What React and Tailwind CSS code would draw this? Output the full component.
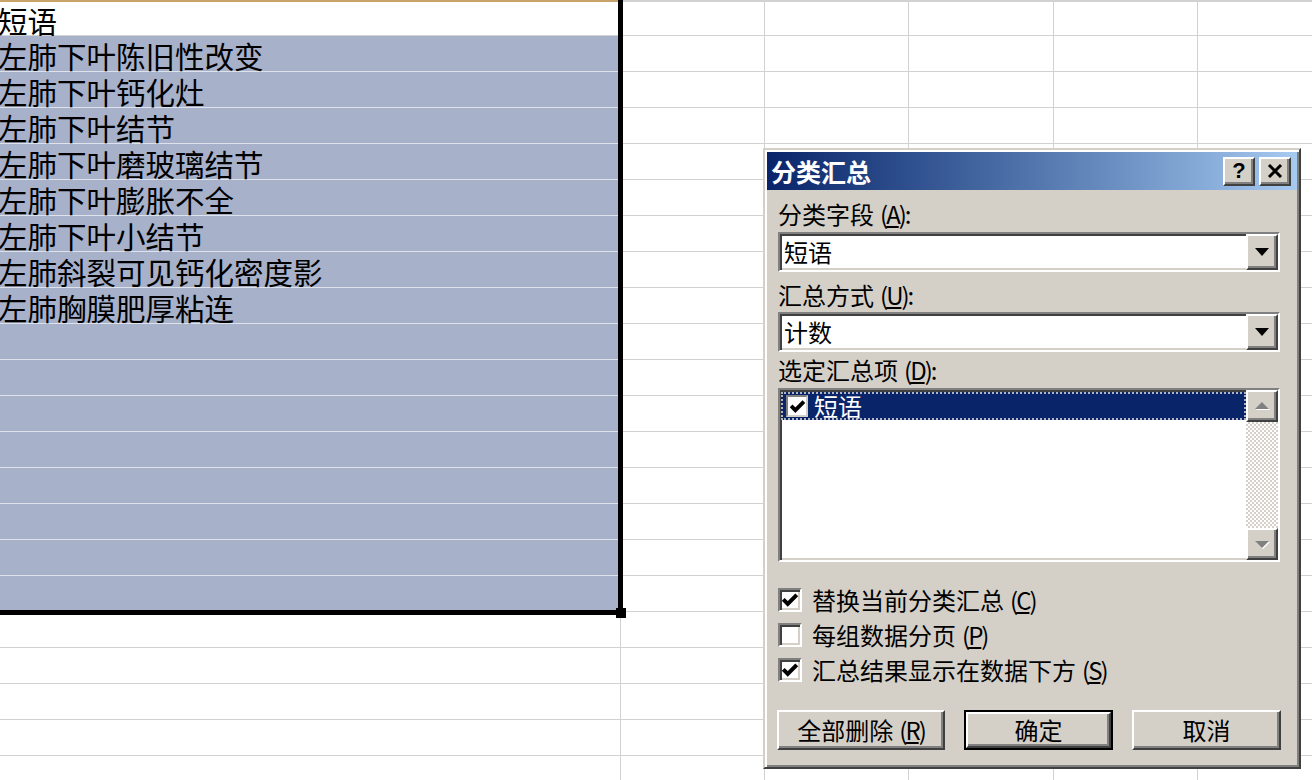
import React from "react";

const phrases = [
  "短语",
  "左肺下叶陈旧性改变",
  "左肺下叶钙化灶",
  "左肺下叶结节",
  "左肺下叶磨玻璃结节",
  "左肺下叶膨胀不全",
  "左肺下叶小结节",
  "左肺斜裂可见钙化密度影",
  "左肺胸膜肥厚粘连",
];

const raised =
  "bg-[#d4d0c8] border-2 border-t-white border-l-white border-r-[#404040] border-b-[#404040] shadow-[inset_-2px_-2px_0_0_#808080]";
const sunken =
  "border-2 border-t-[#808080] border-l-[#808080] border-r-white border-b-white shadow-[inset_2px_2px_0_0_#404040,inset_-2px_-2px_0_0_#d4d0c8]";

const otherCols = ["w-[144px]", "w-[144px]", "w-[145px]", "w-[144px]"];

function Row({ index }) {
  const text = phrases[index] || "";
  const selected = index >= 1 && index <= 16;
  const first = index === 0;
  return (
    <div className="flex h-[36px] shrink-0">
      <div
        className={`w-[621px] shrink-0 flex items-center border-r border-b whitespace-nowrap ${
          selected ? "bg-[#a7b1ca] border-[#dde2eb]" : "bg-white border-[#d2d2d2]"
        } ${first ? "border-t-2 border-t-[#c8a46a]" : ""}`}
      >
        <span className="block -ml-[2px] pt-[2px] text-[29.5px] leading-[32px] text-black">{text}</span>
      </div>
      {otherCols.map((w, i) => (
        <div
          key={i}
          className={`${w} shrink-0 border-r border-b border-[#d2d2d2] ${first ? "border-t-2 border-t-[#d2d2d2]" : ""}`}
        />
      ))}
      <div className={`flex-1 border-b border-[#d2d2d2] ${first ? "border-t-2 border-t-[#d2d2d2]" : ""}`} />
    </div>
  );
}

// mnemonic key, e.g. (A)
function Mn({ k }) {
  return (
    <span className="ml-[6px] tracking-[-2px]">
      (<u className="underline-offset-2">{k}</u>)
    </span>
  );
}

function Tick({ size = 18 }) {
  return (
    <svg width={size} height={size} viewBox="0 0 16 16">
      <polyline points="2,7.5 6,11.5 14,3.5" fill="none" stroke="#000" strokeWidth="3.6" />
    </svg>
  );
}

function Combo({ value }) {
  return (
    <div className={`h-[40px] w-[502px] flex items-center bg-white ${sunken}`}>
      <span className="flex-1 pl-[4px] text-[24px] leading-none text-black">{value}</span>
      <div className={`w-[32px] h-full flex items-center justify-center ${raised}`}>
        <svg width="14" height="8" viewBox="0 0 14 8">
          <path d="M0 0h14L7 8z" fill="#000" />
        </svg>
      </div>
    </div>
  );
}

function ScrollArrow({ up }) {
  return (
    <div className={`h-[32px] w-full flex items-center justify-center ${raised}`}>
      <svg width="16" height="10" viewBox="0 0 16 10">
        {up ? (
          <>
            <path d="M2 9h14L9 2z" fill="#fff" />
            <path d="M1 8h14L8 1z" fill="#808080" />
          </>
        ) : (
          <>
            <path d="M2 3h14L9 10z" fill="#fff" />
            <path d="M1 2h14L8 9z" fill="#808080" />
          </>
        )}
      </svg>
    </div>
  );
}

function CheckBox({ checked, label, k }) {
  return (
    <div className="flex items-center h-[24px] gap-[10px]">
      <div className={`w-[24px] h-[24px] bg-white flex items-center justify-center ${sunken}`}>
        {checked && <Tick />}
      </div>
      <span className="text-[24px] leading-none text-black whitespace-nowrap">
        {label}
        <Mn k={k} />
      </span>
    </div>
  );
}

function Button({ className, children }) {
  return (
    <div className={`h-[40px] flex items-center justify-center text-[24px] leading-none text-black ${raised} ${className}`}>
      {children}
    </div>
  );
}

function Dialog() {
  return (
    <div className="absolute left-[763px] top-[148px] w-[538px] h-[621px] bg-[#d4d0c8] border-2 border-t-[#d4d0c8] border-l-[#d4d0c8] border-r-[#404040] border-b-[#404040] shadow-[inset_2px_2px_0_0_#ffffff,inset_-2px_-2px_0_0_#808080] p-[2px] flex flex-col">
      <div className="h-[38px] shrink-0 flex items-center bg-linear-to-r from-[#0a246a] to-[#a6caf0] pl-[4px] pr-[6px]">
        <span className="flex-1 text-white font-bold text-[25px] leading-none">分类汇总</span>
        <div className={`w-[32px] h-[29px] mr-[4px] flex items-center justify-center ${raised}`}>
          <span className="font-['Liberation_Sans',sans-serif] font-bold text-[22px] leading-none text-black">?</span>
        </div>
        <div className={`w-[32px] h-[29px] flex items-center justify-center ${raised}`}>
          <svg width="16" height="14" viewBox="0 0 16 14">
            <path d="M2 1L14 13M14 1L2 13" stroke="#000" strokeWidth="3" fill="none" />
          </svg>
        </div>
      </div>

      <div className="flex flex-col pl-[11px]">
        <div className="mt-[6px] h-[36px] flex items-center text-[24px] leading-none text-black">
          分类字段<Mn k="A" />:
        </div>
        <Combo value="短语" />
        <div className="h-[40px] pt-[6px] flex items-center text-[24px] leading-none text-black">
          汇总方式<Mn k="U" />:
        </div>
        <Combo value="计数" />
        <div className="h-[36px] flex items-center text-[24px] leading-none text-black">
          选定汇总项<Mn k="D" />:
        </div>

        <div className={`h-[174px] w-[502px] flex bg-white ${sunken}`}>
          <div className="flex-1 pt-[2px] pl-[1px]">
            <div className="h-[28px] flex items-center bg-[#0a246a] border-2 border-dotted border-[#b0b4c0]">
              <div className="ml-[3px] w-[22px] h-[22px] bg-white border-2 border-t-[#808080] border-l-[#808080] border-r-[#d4d0c8] border-b-[#d4d0c8] flex items-center justify-center">
                <Tick size={17} />
              </div>
              <span className="ml-[6px] text-white text-[24px] leading-none">短语</span>
            </div>
          </div>
          <div className="w-[32px] flex flex-col">
            <ScrollArrow up />
            <div className="flex-1 bg-[repeating-conic-gradient(#d4d0c8_0%_25%,#ffffff_0%_50%)] bg-[length:4px_4px]" />
            <ScrollArrow />
          </div>
        </div>

        <div className="mt-[26px] flex flex-col gap-[11px]">
          <CheckBox checked label="替换当前分类汇总" k="C" />
          <CheckBox label="每组数据分页" k="P" />
          <CheckBox checked label="汇总结果显示在数据下方" k="S" />
        </div>

        <div className="mt-[28px] flex gap-[19px] -ml-[1px]">
          <Button className="w-[168px]">
            全部删除<Mn k="R" />
          </Button>
          <div className="w-[149px] h-[40px] border-2 border-black">
            <div className={`h-full flex items-center justify-center text-[24px] leading-none text-black ${raised}`}>确定</div>
          </div>
          <Button className="w-[149px]">取消</Button>
        </div>
      </div>
    </div>
  );
}

export default function App() {
  return (
    <div className="relative w-[1312px] h-[780px] overflow-hidden bg-white font-['Noto_Sans_CJK_SC','Noto_Sans',sans-serif]">
      <div className="flex flex-col">
        {Array.from({ length: 22 }).map((_, i) => (
          <Row key={i} index={i} />
        ))}
      </div>

      {/* selection frame + fill handle */}
      <div className="absolute left-0 top-0 w-[623px] h-[615px] border-r-[5px] border-b-[5px] border-black pointer-events-none" />
      <div className="absolute left-[616px] top-[608px] w-[10px] h-[10px] bg-black" />

      <Dialog />
    </div>
  );
}
